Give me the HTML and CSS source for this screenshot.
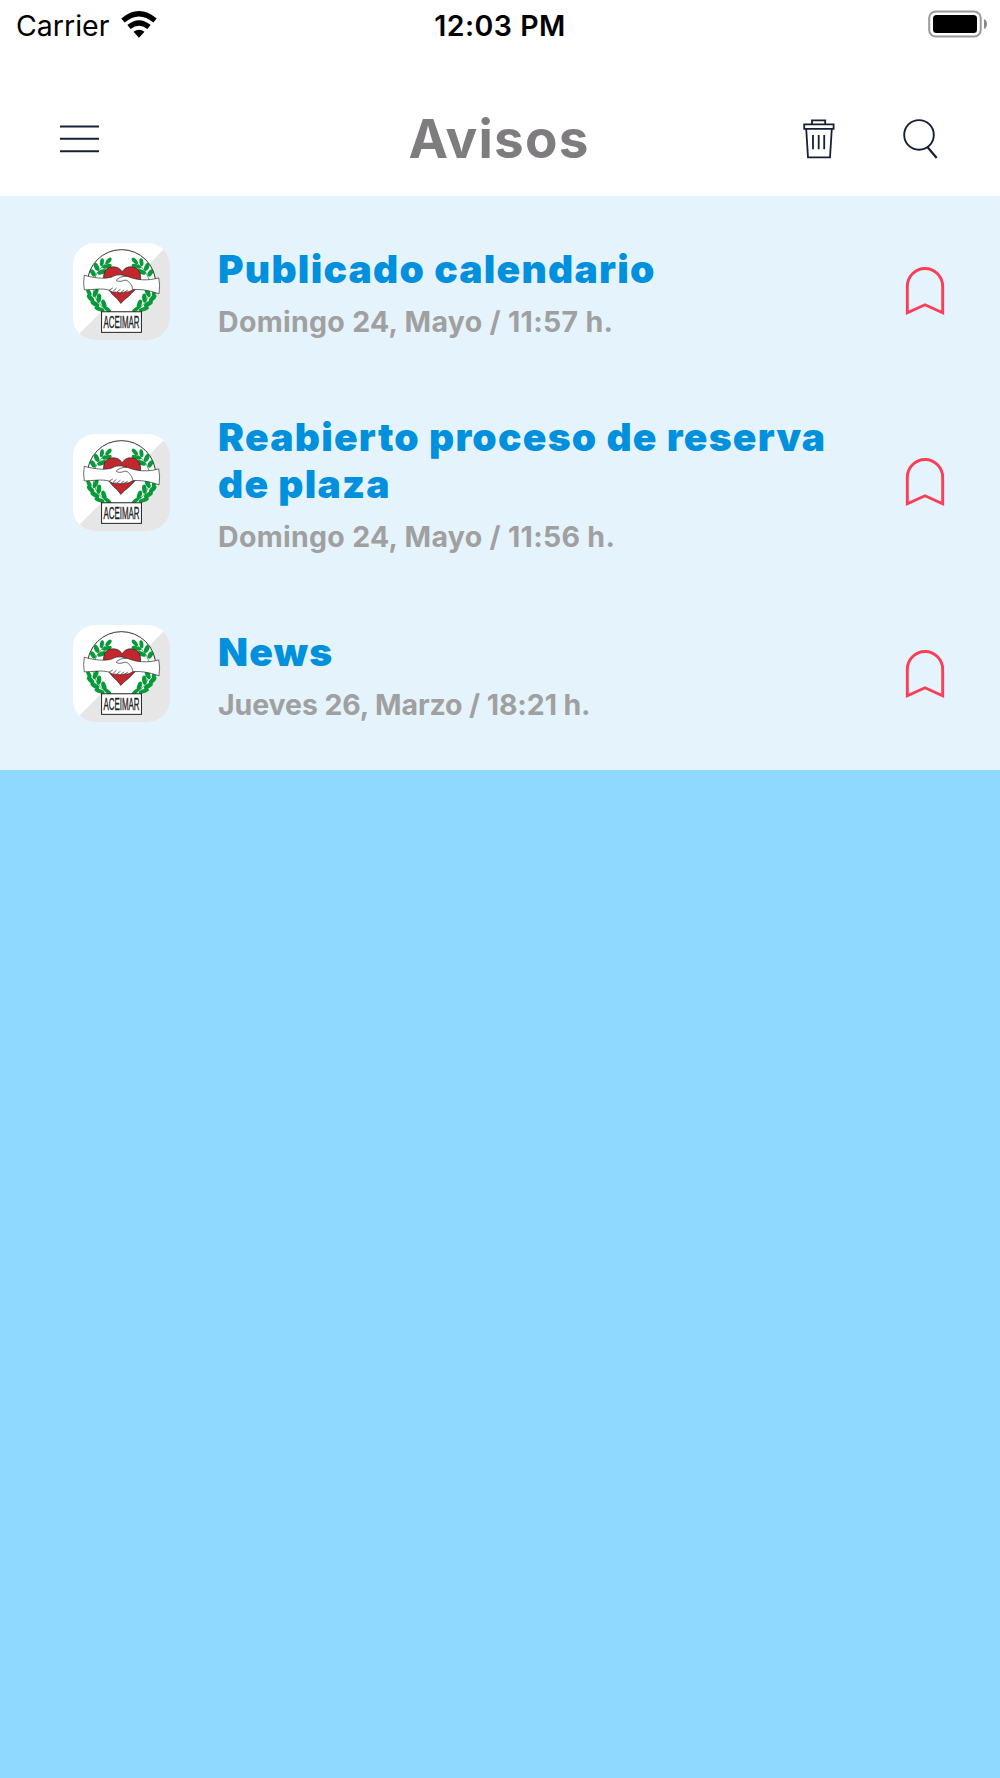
FILE: index.html
```
<!DOCTYPE html>
<html lang="es">
<head>
    <meta charset="UTF-8">
    <meta name="viewport" content="width=device-width, initial-scale=1.0">
    <title>Avisos</title>
    <link rel="stylesheet" href="styles.css">
</head>
<body>
    <!-- shared icons -->
    <svg class="defs" width="0" height="0">
        <g id="logo">
            <rect x="38" y="37" width="292" height="292" fill="#fff"/>
            <path d="M330 37V329H38Z" fill="#e6e6e6"/>
            <circle cx="184" cy="160" r="103" fill="#fff" stroke="#333" stroke-width="3"/>
            <g id="branch" fill="#069b38">
                <path d="M150 88Q96 125 98 175Q104 220 145 243" fill="none" stroke="#07843a" stroke-width="2"/>
                <ellipse cx="145" cy="91" rx="12" ry="6" transform="rotate(-48 145 91)"/>
                <ellipse cx="125" cy="95" rx="12" ry="6" transform="rotate(-82 125 95)"/>
                <ellipse cx="140" cy="107" rx="15" ry="6" transform="rotate(-15 140 107)"/>
                <ellipse cx="109" cy="109" rx="13" ry="7" transform="rotate(65 109 109)"/>
                <ellipse cx="125" cy="124" rx="14" ry="7" transform="rotate(-22 125 124)"/>
                <ellipse cx="98" cy="127" rx="12" ry="7" transform="rotate(60 98 127)"/>
                <ellipse cx="86" cy="186" rx="12" ry="6" transform="rotate(62 86 186)"/>
                <ellipse cx="106" cy="187" rx="14" ry="7" transform="rotate(-65 106 187)"/>
                <ellipse cx="91" cy="203" rx="14" ry="7" transform="rotate(45 91 203)"/>
                <ellipse cx="116" cy="203" rx="14" ry="7" transform="rotate(-85 116 203)"/>
                <ellipse cx="104" cy="220" rx="15" ry="7" transform="rotate(32 104 220)"/>
                <ellipse cx="131" cy="221" rx="14" ry="7" transform="rotate(72 131 221)"/>
                <ellipse cx="118" cy="236" rx="16" ry="6" transform="rotate(18 118 236)"/>
                <ellipse cx="143" cy="238" rx="12" ry="6" transform="rotate(38 143 238)"/>
            </g>
            <use href="#branch" transform="matrix(-1 0 0 1 369 0)"/>
            <path d="M186 124C177 105 145 103 134 122C120 150 145 178 160 195Q173 205 182 219Q192 207 206 197C225 178 250 158 239 126C229 103 196 103 186 124Z" fill="#c1272d" stroke="#222" stroke-width="2"/>
            <path d="M72 134C100 142 130 146 153 140Q168 131 184 133L201 137C230 150 265 151 296 142Q301 163 297 190C268 179 237 175 217 178Q207 187 193 185Q180 189 168 185Q155 187 147 179C125 172 97 178 72 178Q68 156 72 134Z" fill="#fff" stroke="#222" stroke-width="2"/>
            <path d="M201 137C184 137 174 142 168 149Q176 156 194 149C203 148 210 158 215 166L219 178M147 179L158 172M158 183L169 173M170 185L181 176M182 186L192 178M193 185L203 179" fill="none" stroke="#222" stroke-width="2"/>
            <rect x="124" y="244" width="120" height="62" fill="#fff" stroke="#222" stroke-width="3"/>
        </g>
        <symbol id="bookmark" viewBox="0 0 40 50">
            <path d="M2.3 46.8V20.5a17.7 18 0 0 1 35.4 0V46.8L20 38.8Z" fill="none" stroke="#fc3d58" stroke-width="2.9"/>
        </symbol>
    </svg>

    <div class="status-bar">
        <div class="carrier">
            <span>Carrier</span>
            <svg width="38" height="28" viewBox="0 0 38 28">
                <path d="M3 9.5Q19-4 35 9.5" fill="none" stroke="#000" stroke-width="5.2"/>
                <path d="M9 16.1Q19 7.8 29 16.1" fill="none" stroke="#000" stroke-width="5.2"/>
                <path d="M13.5 20.8Q19 16.8 24.5 20.8L19 26.7Z"/>
            </svg>
        </div>
        <div class="time">12:03 PM</div>
        <svg class="battery" width="60" height="28" viewBox="0 0 60 28">
            <rect x="1.2" y="1.5" width="51.5" height="25" rx="6.5" fill="#fff" stroke="#999" stroke-width="2"/>
            <rect x="5" y="5" width="44" height="18" rx="3.5"/>
            <path d="M56 9Q59 10.5 59 14T56 19Z" fill="#888"/>
        </svg>
    </div>

    <header class="header">
        <svg width="40" height="28" viewBox="0 0 40 28" fill="none" stroke="#172033" stroke-width="1.9">
            <path d="M1 1.5H40M1 13.7H40M1 26.3H40"/>
        </svg>
        <h1>Avisos</h1>
        <div class="actions">
            <svg width="32" height="40" viewBox="0 0 32 40" fill="none" stroke="#172033" stroke-width="1.8">
                <path d="M1.2 5.4H30.6V9.8H1.2ZM9 5.4V1.4H22.2V5.4M3.2 9.8L5 38.3H27L28.8 9.8M10 16V30.3M15.7 16V30.3M21.2 16V30.3"/>
            </svg>
            <svg width="36" height="40" viewBox="0 0 36 40" fill="none" stroke="#172033" stroke-width="1.9">
                <circle cx="16" cy="15.9" r="14.8"/>
                <path d="M24.2 27.8L33.7 39" stroke-width="2.2"/>
            </svg>
        </div>
    </header>

    <main class="list">
        <div class="item">
            <svg class="logo" viewBox="38 37 292 292">
                <use href="#logo"/>
                <text x="184" y="293" text-anchor="middle" textLength="109" lengthAdjust="spacingAndGlyphs">ACEIMAR</text>
            </svg>
            <div class="info">
                <h2>Publicado calendario</h2>
                <p>Domingo 24, Mayo / 11:57 h.</p>
            </div>
            <svg class="bookmark"><use href="#bookmark"/></svg>
        </div>
        <div class="item">
            <svg class="logo" viewBox="38 37 292 292">
                <use href="#logo"/>
                <text x="184" y="293" text-anchor="middle" textLength="109" lengthAdjust="spacingAndGlyphs">ACEIMAR</text>
            </svg>
            <div class="info">
                <h2>Reabierto proceso de reserva de plaza</h2>
                <p>Domingo 24, Mayo / 11:56 h.</p>
            </div>
            <svg class="bookmark"><use href="#bookmark"/></svg>
        </div>
        <div class="item">
            <svg class="logo" viewBox="38 37 292 292">
                <use href="#logo"/>
                <text x="184" y="293" text-anchor="middle" textLength="109" lengthAdjust="spacingAndGlyphs">ACEIMAR</text>
            </svg>
            <div class="info">
                <h2>News</h2>
                <p>Jueves 26, Marzo / 18:21 h.</p>
            </div>
            <svg class="bookmark"><use href="#bookmark"/></svg>
        </div>
    </main>
</body>
</html>
```
FILE: styles.css
```
* {
    box-sizing: border-box;
}
body {
    margin: 0;
    min-height: 1778px;
    background-color: #8fd8ff;
    font-family: Inter, sans-serif;
}
svg {
    display: block;
    flex-shrink: 0;
}
.defs {
    position: absolute;
}
.status-bar {
    display: grid;
    grid-template-columns: 1fr auto 1fr;
    align-items: center;
    height: 50px;
    padding: 0 12px 0 16px;
    background-color: #fff;
    font-size: 28.5px;
}
.carrier {
    display: flex;
    align-items: center;
    gap: 11px;
}
.carrier svg {
    margin-top: -1px;
}
.time {
    margin-right: 4px;
    font-size: 28.5px;
    font-weight: 600;
    letter-spacing: 0.5px;
}
.battery {
    justify-self: end;
    margin-top: -2px;
}
.header {
    display: grid;
    grid-template-columns: 1fr auto 1fr;
    align-items: center;
    height: 146px;
    padding: 31px 61px 0 59px;
    background-color: #fff;
}
h1 {
    margin: 0;
    font-size: 53px;
    font-weight: 700;
    line-height: 64px;
    letter-spacing: 1.2px;
    color: #7f7c7f;
}
.actions {
    display: flex;
    justify-content: flex-end;
    gap: 68px;
}
.list {
    height: 574px;
    display: grid;
    grid-template-rows: repeat(3, 1fr);
    background-color: #e5f4fc;
}
.item {
    display: flex;
    align-items: center;
    padding: 0 55px 1px 73px;
}
.logo {
    width: 97px;
    height: 97px;
    border-radius: 22px;
}
.logo text {
    font-family: "Liberation Sans", sans-serif;
    font-size: 48px;
    fill: #222;
    stroke: #222;
    stroke-width: 1px;
}
.info {
    flex: 1;
    margin: 6px 50px 0 48px;
}
h2 {
    margin: 0;
    font-size: 39px;
    font-weight: 900;
    line-height: 47.5px;
    letter-spacing: 1.25px;
    color: #0090dd;
}
p {
    margin: 8px 0 0;
    font-size: 28.5px;
    font-weight: 700;
    line-height: 42px;
    letter-spacing: 0.3px;
    color: #a0a0a0;
}
.item:last-child p {
    letter-spacing: -0.1px;
}
.bookmark {
    width: 40px;
    height: 50px;
}
```
